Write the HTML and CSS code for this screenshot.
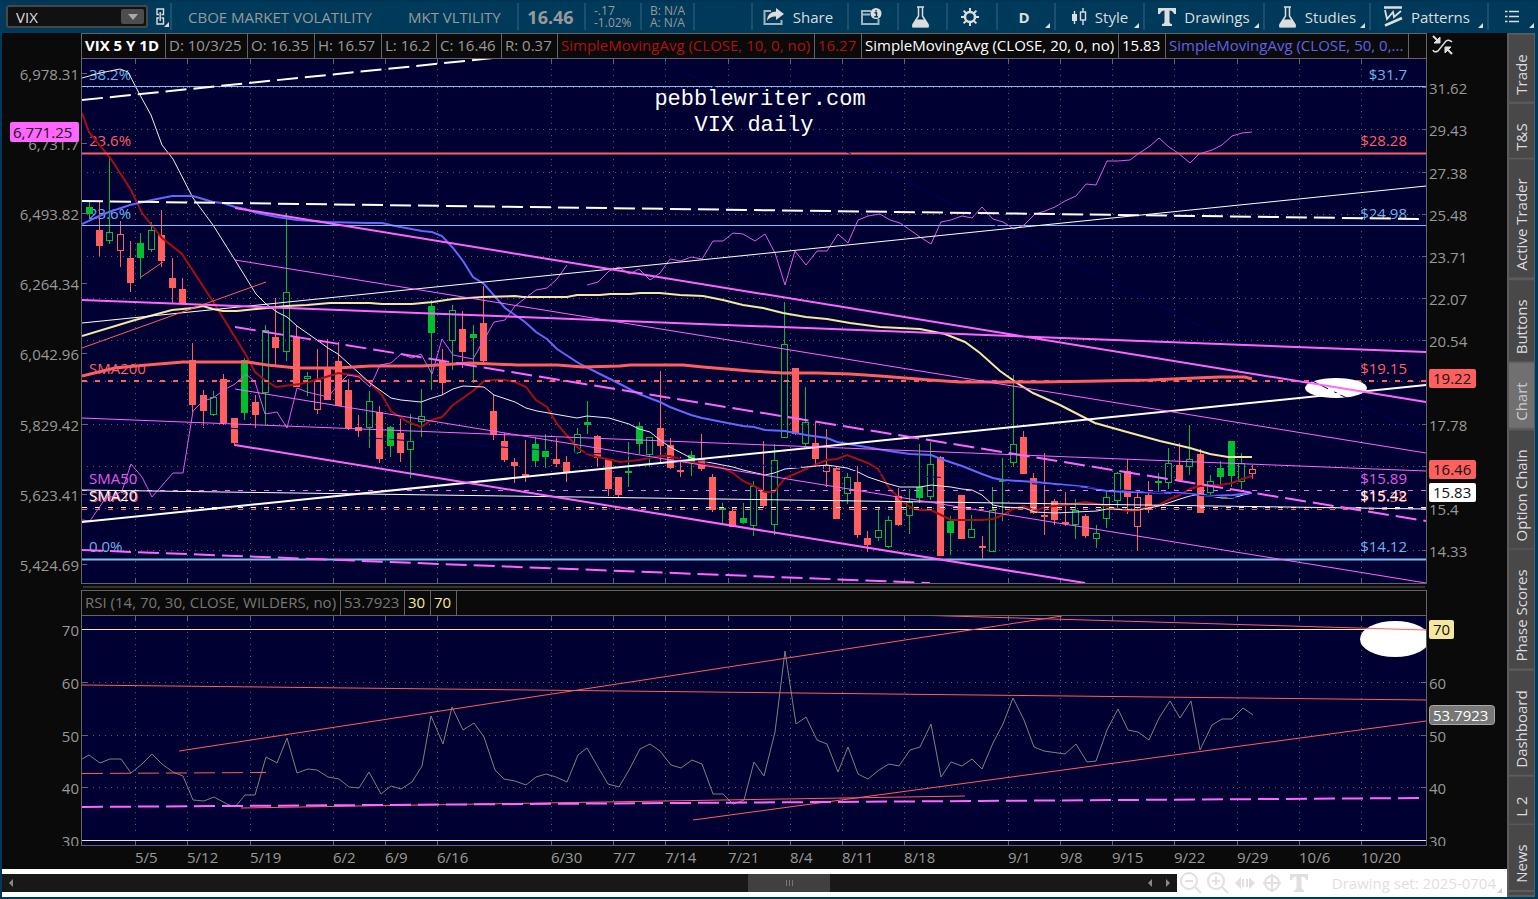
FILE: index.html
```html
<!DOCTYPE html>
<html lang="en">
<head>
    <meta charset="UTF-8">
    <meta name="viewport" content="width=device-width, initial-scale=1.0">
    <title>VIX Chart</title>
    <link rel="stylesheet" href="styles.css">
</head>
<body>
    <header class="toolbar">
        <div class="symbol">
            <div class="symbol-box">
                <input type="text" class="symbol-input" value="VIX" aria-label="Symbol">
                <button class="symbol-arrow" aria-label="Symbol history"><svg width="10" height="6"><path d="M0 0H10L5 6Z" fill="#aaa"/></svg></button>
            </div>
            <button class="icon-button corner" aria-label="Link">
                <svg width="9" height="18" fill="none" stroke="#ddd" stroke-width="1.4"><path d="M3 6.500H1V1H7.500V6.500H5.500M3 10H1V16H7.500V10H5.500M4.200 4V13"/></svg>
            </button>
        </div>
        <div class="section names"><span>CBOE MARKET VOLATILITY</span><span>MKT VLTILITY</span></div>
        <div class="section price">16.46</div>
        <div class="section small change"><span>-.17</span><span>-1.02%</span></div>
        <div class="section small bid"><span>B: N/A</span><span>A: N/A</span></div>
        <div class="section spacer"></div>
        <button class="section share">
            <svg width="22" height="18"><path d="M8 3H1.500V16H18.500V12" fill="none" stroke="#9fb3bf" stroke-width="2"/><path d="M13 0L21 6L13 12V8.500Q7 8 4 13Q4 4 13 3.500Z" fill="#ddd"/></svg>
            Share
        </button>
        <button class="section info" aria-label="News">
            <svg width="21" height="18"><path d="M10 3H1V16H17.500V11M1 6.500H9" fill="none" stroke="#9fb3bf" stroke-width="2"/><circle cx="15" cy="5.500" r="5.500" fill="#ddd"/><path d="M13.500 4.800H15.500V8.500M13.300 8.700H17M15 2V3.500" stroke="#003a5a" stroke-width="1.400" fill="none"/></svg>
        </button>
        <button class="section flask" aria-label="Edit studies">
            <svg width="20" height="22"><path d="M6 1H13M7.500 1V10L2 18.500V20.500H17V18.500L11.500 10V1" fill="none" stroke="#ddd" stroke-width="1.500"/><path d="M5.500 13.500H13.500L17.500 19V21.500H1.500V19Z" fill="#ddd"/></svg>
        </button>
        <button class="section gear" aria-label="Settings">
            <svg width="20" height="20" fill="none" stroke="#ddd"><circle cx="10" cy="10" r="5" stroke-width="2.500"/><path d="M10 1V4M10 16V19M1 10H4M16 10H19M3.600 3.600L6 6M14 14L16.400 16.400M16.400 3.600L14 6M6 14L3.600 16.400" stroke-width="2"/></svg>
        </button>
        <button class="section period corner">D</button>
        <button class="section style corner">
            <svg width="16" height="18"><path d="M3.500 3V16M12 0V4M12 12V17" stroke="#ddd" stroke-width="1.400"/><rect x="1" y="6" width="5" height="7" fill="#ddd"/><rect x="9.500" y="4" width="5" height="8" fill="none" stroke="#ddd" stroke-width="1.400"/></svg>
            Style
        </button>
        <button class="section drawings corner">
            <svg width="18" height="18"><path d="M0 0H18V6H16Q15 2.500 11.500 2.500V14Q11.500 16 14 16V18H4V16Q6.500 16 6.500 14V2.500Q3 2.500 2 6H0Z" fill="#ddd"/></svg>
            Drawings
        </button>
        <button class="section studies corner">
            <svg width="19" height="22"><path d="M6 1H13M7.500 1V10L2 18.500V20.500H17V18.500L11.500 10V1" fill="none" stroke="#ddd" stroke-width="1.500"/><path d="M5.500 13.500H13.500L17.500 19V21.500H1.500V19Z" fill="#ddd"/></svg>
            Studies
        </button>
        <button class="section patterns corner">
            <svg width="19" height="21" fill="none" stroke="#ddd"><path d="M0 1.500H18M1 19.500L18 12" stroke-width="2.500"/><path d="M1 4L3 13L9 6L10 11L17 5" stroke-width="1.800"/></svg>
            Patterns
        </button>
        <button class="section menu corner" aria-label="Menu">
            <svg width="14" height="14"><path d="M0 1.500H2.500M0 6.500H2.500M0 11.500H2.500M4 1.500H14M4 6.500H14M4 11.500H14" stroke="#ddd" stroke-width="1.600"/></svg>
        </button>
    </header>

    <div class="workspace">
        <main class="charts">
            <div class="legend-row">
                <div class="legend">
                    <span class="cell title">VIX 5 Y 1D</span>
                    <span class="cell date"><span>D: 10/3/25</span></span>
                    <span class="cell open"><span>O: 16.35</span></span>
                    <span class="cell open"><span>H: 16.57</span></span>
                    <span class="cell low"><span>L: 16.2</span></span>
                    <span class="cell close"><span>C: 16.46</span></span>
                    <span class="cell range"><span>R: 0.37</span></span>
                    <span class="cell study red"><span>SimpleMovingAvg (CLOSE, 10, 0, no)</span></span>
                    <span class="cell value red"><span>16.27</span></span>
                    <span class="cell study white"><span>SimpleMovingAvg (CLOSE, 20, 0, no)</span></span>
                    <span class="cell value white"><span>15.83</span></span>
                    <span class="cell last blue"><span>SimpleMovingAvg (CLOSE, 50, 0,...</span></span>
                </div>
                <button class="icon-button" aria-label="Collapse">
                    <svg width="22" height="22" fill="none" stroke="#ddd"><path d="M1 15Q2 18 6 16L14 6Q17 4 20 7" stroke-width="1.500"/><path d="M1 1L7 7M20 19L14 13" stroke-width="2"/><path d="M8 2V8H2ZM13 18V12H19Z" fill="#ddd"/></svg>
                </button>
            </div>

            <svg class="pane" id="price-pane" viewBox="2 58 1505 532">
                <defs><clipPath id="price-clip"><rect x="82" y="59" width="1344" height="524"/></clipPath></defs>
                <rect x="81.500" y="58.500" width="1345" height="525" class="plot"/>
                <g class="grid" id="price-grid"></g>
                <g class="axis" id="price-axis"></g>
                <g clip-path="url(#price-clip)">
                    <g class="text-blue"><text x="89" y="80">38.2%</text><text x="89" y="219">23.6%</text><text x="89" y="552">0.0%</text></g>
                    <g class="text-blue end"><text x="1407" y="80">$31.7</text><text x="1407" y="219">$24.98</text><text x="1407" y="552">$14.12</text></g>
                    <g class="text-coral"><text x="89" y="146">23.6%</text><text x="89" y="374">SMA200</text><text x="90" y="502">SMA10</text></g>
                    <g class="text-coral end"><text x="1407" y="146">$28.28</text><text x="1407" y="374">$19.15</text><text x="1407" y="502">$15.38</text></g>
                    <text class="text-pink" x="89" y="484">SMA50</text><text class="text-pink end" x="1407" y="484">$15.89</text>
                    <text class="text-white" x="89" y="501">SMA20</text><text class="text-white end" x="1407" y="501">$15.42</text>

                    <g id="candles"></g>

                    <!-- moving averages -->
                    <polyline class="sma10" points="82,113 89,132 111,159 131,190 142,213 162,238 182,254 214,303 246,355 255,372 265,380 276,387 300,384 320,379 338,373 360,376 370,383 382,395 391,411 408,422 421,427 432,420 442,417 453,405 473,391 484,381 494,380 505,380 515,382 526,387 536,400 547,407 557,424 577,447 587,454 598,457 620,462 639,460 660,456 670,456 683,460 691,462 702,464 723,468 733,473 743,481 754,486 765,492 774,492 785,478 795,474 817,464 827,460 837,459 847,455 868,463 878,469 889,488 900,499 910,507 920,510 931,510 941,515 951,520 982,520 993,519 1003,515 1013,509 1024,506 1035,511 1045,507 1065,505 1086,502 1107,506 1117,509 1128,511 1138,510 1148,507 1159,505 1170,499 1180,495 1190,489 1200,486 1220,485 1232,483 1242,479 1252,476"/>
                    <polyline class="sma20" points="82,78 100,73 120,69 128,72 140,95 151,115 162,145 173,159 193,198 213,225 235,260 256,294 266,304 277,312 287,317 297,326 317,340 328,348 338,354 370,383 391,398 401,400 421,402 432,398 442,395 453,389 463,386 484,387 494,395 515,402 526,408 537,411 577,418 587,416 609,418 619,421 629,424 639,429 650,432 660,440 670,447 691,458 702,461 733,467 743,470 765,475 774,473 785,469 806,467 827,465 847,468 858,472 868,477 889,484 900,487 920,487 931,485 951,487 962,489 972,490 982,495 993,505 1003,507 1024,508 1035,512 1055,513 1076,512 1097,511 1107,509 1138,510 1159,506 1180,499 1190,496 1200,494 1210,496 1222,498 1233,498 1243,495 1252,493"/>
                    <polyline class="sma50" points="82,224 97,217 109,212 130,205 152,200 172,196 193,196 213,202 223,203 235,207 245,209 257,213 277,217 297,220 327,222 367,223 382,223 395,226 422,231 432,232 442,236 453,248 463,261 473,277 484,284 505,308 525,322 536,332 547,339 557,349 580,364 598,373 620,384 639,394 660,402 670,407 691,415 702,418 743,426 754,427 765,430 785,431 806,435 827,438 837,442 889,451 910,454 931,455 941,459 962,466 982,474 993,478 1003,480 1035,482 1055,484 1086,487 1107,491 1128,492 1180,493 1210,496 1233,495 1252,493"/>
                    <polyline class="sma100" points="82,336 135,320 172,310 193,308 203,306 213,309 223,311 237,311 267,308 287,306 307,305 330,303 370,303 382,304 412,304 433,302 453,299 483,297 515,296 523,297 567,297 577,295 600,295 610,294 630,294 640,293 660,293 680,295 703,296 723,300 743,305 763,308 783,313 806,317 827,319 850,323 880,327 920,329 945,334 965,342 980,353 1000,371 1017,383 1033,393 1060,405 1095,423 1127,432 1160,441 1190,448 1210,454 1228,457 1252,457"/>
                    <polyline class="sma200" points="82,376 115,368 147,365 183,362 247,362 267,365 297,368 337,368 370,366 422,366 470,363 517,365 557,365 583,367 620,366 630,365 683,365 703,367 750,371 783,373 817,373 850,374 880,376 930,380 960,382 1040,382 1100,381 1150,380 1195,378 1220,377 1245,377 1252,379"/>

                    <!-- fib levels and horizontals -->
                    <path class="level" d="M82 86.500H1426M82 225.500H1426"/>
                    <path class="level thick" d="M82 559.500H1426"/>
                    <path class="resist" d="M82 153.500H1426"/>
                    <path class="coral-dots thick" d="M82 381H1426"/>
                    <path class="coral-dots" d="M82 509.500H1426"/>
                    <path class="white-dots" d="M82 507.500H1426"/>
                    <path class="pink-dots" d="M82 490.500H1426"/>

                    <!-- comparison symbol -->
                    <path class="pink compare" d="M82 520L90 521L107 496L112 497L122 491L131 464L142 477L152 497L173 473H183L193 411L203 401L213 398L224 390L235 384L246 374L255 382L265 414L277 412L287 428L297 388L307 392L328 397L338 385L348 375L359 377L370 387L380 365L391 363L401 354L412 358L421 354L432 374L442 339L453 355L463 357L473 359L494 322L505 320L515 306L536 290L547 288L557 279L567 265M587 285L598 282L609 271L619 267L629 274L639 269L650 280L660 273L670 259L681 261L691 257L702 259L713 241H723L733 233L743 234L755 241L765 234L775 253L785 285L795 251L806 265L817 251H827L838 234L848 243L858 220L868 216L880 214L890 220L900 223L920 237L931 244L941 222L951 220L962 216L972 218L982 207L993 219L1003 222L1014 229L1024 225L1035 214L1045 211L1055 207L1065 201L1076 196L1086 184L1096 185L1107 161H1118L1130 160L1138 154L1150 146L1159 138L1169 147L1178 153L1190 163L1199 154L1212 150L1222 145L1232 136L1242 133L1252 132"/>

                    <!-- trend lines -->
                    <ellipse cx="1336" cy="388" rx="31" ry="10" fill="#fff"/>
                    <path class="navy dashed" d="M656 58L1426 437M82 418L1426 511"/>
                    <path class="white" d="M82 323L1426 186M82 490L1426 509"/>
                    <path class="white thick" d="M82 522L1426 385"/>
                    <path class="white thick dashed" d="M82 100L494 58M82 201L1420 219"/>
                    <path class="pink" d="M235 260L1426 453M235 389L1426 583M82 418L1426 471"/>
                    <path class="pink thick" d="M235 208L1426 402M235 445L1085 583M82 300L1426 352"/>
                    <path class="pink thick dashed" d="M235 327L1426 521M82 550L930 583"/>
                    <path class="coral" d="M82 348L266 282M141 277L163 262"/>
                    <text class="watermark" x="760" y="105">pebblewriter.com</text>
                    <text class="watermark" x="754" y="131">VIX daily</text>
                </g>
                <g class="chip">
                    <rect x="10" y="122" width="69" height="20" rx="2" fill="#ff66ff"/><text x="13" y="138">6,771.25</text>
                    <rect x="1429" y="369" width="47" height="19" rx="2" fill="#ff5f5f"/><text x="1433" y="384">19.22</text>
                    <rect x="1429" y="460" width="47" height="19" rx="2" fill="#ff5f5f"/><text x="1433" y="475">16.46</text>
                    <rect x="1429" y="483" width="47" height="19" rx="2" fill="#fff"/><text x="1433" y="498">15.83</text>
                </g>
                <rect x="83" y="586" width="1342" height="2" fill="#333"/>
            </svg>

            <div class="legend-row">
                <div class="legend">
                    <span class="cell rsi"><span>RSI (14, 70, 30, CLOSE, WILDERS, no)</span></span>
                    <span class="cell rsi-value"><span>53.7923</span></span>
                    <span class="cell cream">30</span>
                    <span class="cell cream">70</span>
                </div>
            </div>

            <svg class="pane" id="rsi-pane" viewBox="2 615 1505 254">
                <defs>
                    <clipPath id="rsi-clip"><rect x="82" y="616" width="1344" height="229"/></clipPath>
                    <clipPath id="rsi-axis-clip"><rect x="2" y="615" width="1505" height="231"/></clipPath>
                </defs>
                <rect x="81.500" y="615.500" width="1345" height="230" class="plot"/>
                <g class="grid" id="rsi-grid"></g>
                <g class="axis" id="rsi-axis" clip-path="url(#rsi-axis-clip)"></g>
                <g class="axis" id="dates"></g>
                <g clip-path="url(#rsi-clip)">
                    <path class="cream-line" d="M82 629.500H1426M82 840.500H1426"/>
                    <polyline class="rsi-line" points="82,759 89,755 100,763 110,759 121,759 131,773 142,764 152,754 162,764 173,772 183,776 193,800 204,801 214,797 227,804 235,807 245,795 255,795 266,757 277,763 287,738 297,773 308,769 317,770 328,777 339,779 349,787 359,788 369,772 381,794 391,786 401,789 412,782 422,766 431,716 443,744 452,707 463,730 474,723 484,737 495,770 504,779 515,781 526,785 536,777 546,774 556,777 567,782 578,755 587,748 598,767 608,784 619,787 629,770 640,749 650,744 660,751 671,765 681,768 692,760 702,764 713,794 723,794 733,804 744,800 754,762 764,776 775,732 785,651 796,724 806,717 817,740 827,744 838,772 848,747 858,774 868,779 879,770 889,764 899,766 910,750 920,747 931,724 941,777 951,762 962,766 972,759 982,769 993,743 1003,724 1013,698 1024,720 1034,747 1044,751 1065,754 1076,744 1087,762 1096,761 1107,730 1118,709 1128,730 1138,732 1149,740 1159,718 1170,701 1180,718 1191,701 1200,750 1212,725 1222,719 1232,719 1243,708 1253,715"/>
                    <ellipse cx="1395" cy="639" rx="35" ry="18" fill="#fff"/>
                    <path class="coral" d="M82 685L1426 700M179 751L1062 616M915 615L1426 630M241 808L965 796M693 820L1426 721"/>
                    <path class="coral dashed" d="M82 773.500L266 772.500"/>
                    <path class="pink thick dashed" d="M82 807L1419 798"/>
                </g>
                <g class="chip">
                    <rect x="1429" y="620" width="25" height="19" rx="2" fill="#f5e79e"/><text x="1433" y="635">70</text>
                    <rect x="1429.500" y="705.500" width="65" height="19" rx="3" fill="#777" stroke="#aaa"/><text class="text-white" x="1433" y="721">53.7923</text>
                </g>
            </svg>

            <footer class="bottom">
                <div class="scroll">
                    <button aria-label="Scroll to start"><svg width="4" height="8"><path d="M4 0V8L0 4Z" fill="#888"/></svg></button>
                    <div class="track"><div class="thumb"></div></div>
                    <button aria-label="Step left"><svg width="4" height="8"><path d="M4 0V8L0 4Z" fill="#888"/></svg></button>
                    <button aria-label="Step right"><svg width="4" height="8"><path d="M0 0V8L4 4Z" fill="#888"/></svg></button>
                </div>
                <div class="tools">
                    <button aria-label="Zoom out"><svg width="22" height="22" fill="none" stroke="#e0e0e0" stroke-width="2"><circle cx="9" cy="9" r="8"/><path d="M15 15L21 21M5 9H13"/></svg></button>
                    <button aria-label="Zoom in"><svg width="22" height="22" fill="none" stroke="#e0e0e0" stroke-width="2"><circle cx="9" cy="9" r="8"/><path d="M15 15L21 21M5 9H13M9 5V13"/></svg></button>
                    <button aria-label="Pan"><svg width="20" height="12" fill="#e0e0e0"><path d="M6 0V12L0 6ZM14 0V12L20 6ZM7 2H9V10H7ZM11 2H13V10H11Z"/></svg></button>
                    <button aria-label="Crosshair"><svg width="18" height="18" fill="none" stroke="#e0e0e0" stroke-width="2"><circle cx="9" cy="9" r="7"/><path d="M0 9H18M9 0V18"/></svg></button>
                    <button aria-label="Text"><svg width="18" height="18"><path d="M0 0H18V6H16Q15 2.500 11.500 2.500V14Q11.500 16 14 16V18H4V16Q6.500 16 6.500 14V2.500Q3 2.500 2 6H0Z" fill="#e0e0e0"/></svg></button>
                </div>
                <button class="drawing-set corner">Drawing set: 2025-0704</button>
            </footer>
        </main>

        <nav class="sidebar">
            <button class="tab">Trade</button>
            <button class="tab">T&amp;S</button>
            <button class="tab">Active Trader</button>
            <button class="tab">Buttons</button>
            <button class="tab active">Chart</button>
            <button class="tab">Option Chain</button>
            <button class="tab">Phase Scores</button>
            <button class="tab">Dashboard</button>
            <button class="tab">L 2</button>
            <button class="tab">News</button>
            <div class="tab-rest"></div>
        </nav>
    </div>
    <script src="chart.js"></script>
</body>
</html>
```
FILE: styles.css
```css
* {
    box-sizing: border-box;
}
body {
    margin: 0;
    padding: 0 3px 2px 2px;
    min-height: 100vh;
    display: flex;
    flex-direction: column;
    background-color: #003a5a;
    color: #999;
    font-family: "Open Sans", sans-serif;
    font-size: 15px;
}
button, input {
    font: inherit;
    color: inherit;
    background: none;
    border: none;
    padding: 0;
    margin: 0;
}
button {
    cursor: pointer;
}
svg {
    display: block;
    flex: none;
}

/* toolbar */
.toolbar {
    display: flex;
    height: 33px;
    padding: 1px 0 3px;
    margin-right: -3px;
    border-top: 2px solid #003454;
    color: #ddd;
}
.symbol {
    width: 168px;
    display: flex;
    align-items: center;
    padding-left: 4px;
}
.symbol-box {
    display: flex;
    align-items: center;
    width: 142px;
    height: 23px;
    padding: 0 2px 0 8px;
    border: 2px solid #474747;
    border-radius: 3px;
    background-color: #111;
}
.symbol-input {
    flex: 1;
    min-width: 0;
    outline: none;
}
.symbol-arrow {
    display: flex;
    justify-content: center;
    align-items: center;
    width: 23px;
    height: 15px;
    border-radius: 2px;
    background-color: #4d4d4d;
}
.icon-button {
    padding: 0 4px;
    margin-left: 4px;
}
.corner {
    position: relative;
}
.corner::after {
    content: "";
    position: absolute;
    right: 4px;
    bottom: 2px;
    border-left: 5px solid transparent;
    border-bottom: 5px solid #ddd;
}
.symbol .corner::after {
    right: 0;
    bottom: -1px;
}
.section {
    display: flex;
    align-items: center;
    justify-content: center;
    gap: 8px;
    border-left: 2px solid #1c4f6e;
}
.names {
    width: 347px;
    justify-content: flex-start;
    gap: 36px;
    padding-left: 16px;
    color: #999;
}
.price {
    width: 67px;
    padding-right: 2px;
    color: #999;
    font-size: 18px;
    font-weight: bold;
}
.small {
    flex-direction: column;
    align-items: flex-start;
    gap: 0;
    padding-left: 8px;
    color: #999;
    font-size: 12px;
    line-height: 12px;
}
.change {
    width: 56px;
}
.bid {
    width: 53px;
}
.spacer {
    flex: 1;
}
.share {
    width: 96px;
    padding-right: 4px;
}
.info, .gear {
    width: 50px;
    padding-right: 4px;
}
.flask {
    width: 49px;
    padding-right: 4px;
}
.period {
    width: 58px;
    padding-right: 4px;
    font-weight: bold;
}
.style {
    width: 89px;
}
.drawings {
    width: 120px;
}
.studies {
    width: 106px;
}
.patterns {
    width: 118px;
    padding-right: 4px;
}
.menu {
    width: 51px;
    padding-right: 4px;
}

/* layout */
.workspace {
    flex: 1;
    display: flex;
}
.charts {
    flex: 1;
    min-width: 0;
    display: flex;
    flex-direction: column;
    background-color: #0a0a0a;
}
.legend-row {
    display: flex;
    height: 25px;
    padding-left: 79px;
    padding-right: 80px;
}
.legend {
    flex: 1;
    display: flex;
    border: 1px solid #646464;
    border-bottom: none;
}
.legend-row .icon-button {
    width: 32px;
    margin-right: -32px;
    margin-left: 0;
    padding: 0 5px;
}
.cell {
    padding: 0 4px 0 3px;
    border-right: 1px solid #646464;
    line-height: 23px;
    white-space: nowrap;
}
.cell span {
    display: block;
    overflow: hidden;
}
.title {
    width: 84px;
    color: #fff;
    font-weight: bold;
}
.date {
    width: 82px;
}
.open {
    width: 67px;
}
.low {
    width: 55px;
}
.close {
    width: 65px;
}
.range {
    width: 56px;
}
.study {
    width: 257px;
    padding: 0 0 0 3px;
}
.value {
    width: 47px;
}
.last {
    width: 243px;
    padding: 0 0 0 3px;
}
.rsi {
    width: 259px;
    padding-right: 0;
    color: #777;
}
.rsi-value {
    width: 64px;
    color: #777;
}
.red {
    color: #b01010;
}
.white {
    color: #fff;
}
.blue {
    color: #6060f0;
}
.cream {
    width: 26px;
    color: #f5e79e;
}

/* chart panes */
.pane {
    width: 100%;
    height: auto;
}
.pane text {
    font-size: 15px;
}
.plot {
    fill: #000033;
    stroke: #646464;
}
.grid {
    fill: none;
    stroke: #606068;
    stroke-dasharray: 1 5;
    shape-rendering: crispEdges;
}
.axis {
    fill: #999;
    stroke: none;
}
.axis path {
    stroke: #646464;
}
.end {
    text-anchor: end;
}
.text-blue {
    fill: #6db3e8;
}
.text-coral {
    fill: #ff5f5f;
}
.text-pink {
    fill: #e05ce8;
}
.text-white {
    fill: #fff;
}
.chip {
    fill: #111;
}
.pane .watermark {
    font-family: "Liberation Mono", monospace;
    font-size: 22px;
    fill: #fff;
    text-anchor: middle;
}
polyline, path.white, path.pink, path.coral, path.navy {
    fill: none;
}
.up {
    stroke: #00c030;
    fill: none;
}
.up-solid {
    stroke: #00c030;
    fill: #00c030;
}
.down {
    stroke: #ff5f5f;
    fill: none;
}
.down-solid {
    stroke: #ff5f5f;
    fill: #ff5f5f;
}
#candles {
    shape-rendering: crispEdges;
}
.sma10 {
    stroke: #a80e0e;
    stroke-width: 2;
}
.sma20 {
    stroke: #eee;
}
.sma50 {
    stroke: #6666ff;
    stroke-width: 2;
}
.sma100 {
    stroke: #f5e79e;
    stroke-width: 2;
}
.sma200 {
    stroke: #ff5f5f;
    stroke-width: 3;
}
.level {
    stroke: #7ac0f0;
}
.resist {
    stroke: #ff5f5f;
    stroke-width: 2;
}
.coral-dots {
    stroke: #ff5f5f;
    stroke-dasharray: 5 8;
}
.white-dots {
    stroke: #fff;
    stroke-dasharray: 5 8;
}
.pink-dots {
    stroke: #ff66ff;
    stroke-dasharray: 5 8;
}
path.white {
    stroke: #fff;
}
.pink {
    stroke: #ff66ff;
}
.compare {
    stroke: #e05ce8;
}
.coral {
    stroke: #ff5f5f;
}
.navy {
    stroke: #000062;
}
.thick {
    stroke-width: 2;
}
.dashed {
    stroke-dasharray: 21 7;
}
.rsi-line {
    stroke: #808080;
}
.cream-line {
    stroke: #f5e79e;
}

/* bottom bar */
.bottom {
    flex: 1;
    display: flex;
    align-items: center;
    background-color: #fff;
    color: #e0e0e0;
}
.scroll {
    flex: 1;
    display: flex;
    height: 18px;
    background-color: #181818;
}
.scroll button {
    width: 18px;
    display: flex;
    align-items: center;
    justify-content: center;
}
.track {
    flex: 1;
    padding-left: 62%;
}
.thumb {
    width: 82px;
    height: 18px;
    background: repeating-linear-gradient(90deg, #777 0 1px, #404040 1px 3px) center / 7px 6px no-repeat #404040;
}
.tools {
    display: flex;
    align-items: center;
    gap: 5px;
    padding: 0 22px 0 3px;
}
.tools button {
    display: flex;
    align-items: center;
    justify-content: center;
    width: 22px;
}
.bottom .corner::after {
    right: -6px;
    bottom: 0;
    border-bottom-color: #ccc;
}
.drawing-set {
    margin-right: 11px;
}

/* side tabs */
.sidebar {
    width: 28px;
    display: flex;
    flex-direction: column;
    gap: 2px;
    padding: 2px 1px 2px 2px;
    background-color: #5c5c5c;
    color: #ddd;
}
/* rotated half a turn, so the top padding is the one below the label */
.tab {
    flex: 1 0 auto;
    writing-mode: vertical-rl;
    transform: rotate(180deg);
    padding: 7px 0 19px;
    line-height: 25px;
    background-color: #484848;
}
.active {
    background-color: #707070;
    color: #ccc;
}
.tab-rest {
    height: 3px;
    background-color: #484848;
}
```
FILE: chart.js
```js
const NS = 'http://www.w3.org/2000/svg';

function add(parent, name, attrs, text) {
    const el = document.createElementNS(NS, name);
    for (const key in attrs) el.setAttribute(key, attrs[key]);
    if (text) el.textContent = text;
    parent.appendChild(el);
}

const byId = id => document.getElementById(id);

const days = [
    [135, '5/5'], [187, '5/12'], [250, '5/19'], [333, '6/2'], [385, '6/9'], [437, '6/16'],
    [551, '6/30'], [613, '7/7'], [665, '7/14'], [728, '7/21'], [790, '8/4'], [842, '8/11'],
    [904, '8/18'], [1008, '9/1'], [1060, '9/8'], [1112, '9/15'], [1174, '9/22'], [1237, '9/29'],
    [1299, '10/6'], [1361, '10/20']
];
const rightTicks = [
    [88, '31.62'], [130, '29.43'], [173, '27.38'], [215, '25.48'], [257, '23.71'], [299, '22.07'],
    [341, '20.54'], [382, '19.11'], [425, '17.78'], [467, '16.54'], [509, '15.4'], [551, '14.33']
];
const leftTicks = [
    [74, '6,978.31'], [144, '6,731.7'], [214, '6,493.82'], [284, '6,264.34'],
    [354, '6,042.96'], [425, '5,829.42'], [495, '5,623.41'], [565, '5,424.69']
];
const rsiTicks = [[630, '70'], [683, '60'], [736, '50'], [788, '40'], [841, '30']];

days.forEach(([x, label]) => {
    add(byId('price-grid'), 'path', { d: `M${x + 0.5} 69V577` });
    add(byId('rsi-grid'), 'path', { d: `M${x + 0.5} 626V835` });
    add(byId('price-axis'), 'path', { d: `M${x + 0.5} 59v5M${x + 0.5} 583v-5` });
    add(byId('rsi-axis'), 'path', { d: `M${x + 0.5} 616v5M${x + 0.5} 845v-5` });
    add(byId('dates'), 'text', { x: x, y: 863 }, label);
});
rightTicks.forEach(([y, label]) => {
    add(byId('price-grid'), 'path', { d: `M87 ${y - 0.5}H1422` });
    add(byId('price-axis'), 'path', { d: `M1422 ${y - 0.5}h5` });
    add(byId('price-axis'), 'text', { x: 1429, y: y + 6 }, label);
});
leftTicks.forEach(([y, label]) => {
    add(byId('price-axis'), 'path', { d: `M82 ${y - 0.5}h5` });
    add(byId('price-axis'), 'text', { x: 79, y: y + 6, class: 'end' }, label);
});
rsiTicks.forEach(([y, label]) => {
    add(byId('rsi-grid'), 'path', { d: `M87 ${y - 0.5}H1422` });
    add(byId('rsi-axis'), 'path', { d: `M82 ${y - 0.5}h5M1421 ${y - 0.5}h5` });
    add(byId('rsi-axis'), 'text', { x: 79, y: y + 6, class: 'end' }, label);
    add(byId('rsi-axis'), 'text', { x: 1429, y: y + 6 }, label);
});

// high, low, body top, body bottom, type
// U = hollow green, G = solid green, R = solid red, H = hollow red
const candles = [
    [201, 219, 207, 214, 'G'], [202, 256, 230, 246, 'R'], [158, 244, 232, 241, 'U'], [221, 267, 234, 251, 'H'],
    [241, 292, 258, 283, 'R'], [233, 279, 243, 258, 'G'], [222, 252, 230, 250, 'U'], [210, 267, 235, 261, 'R'],
    [258, 303, 278, 288, 'R'], [278, 303, 289, 303, 'R'], [343, 412, 360, 405, 'R'], [390, 428, 395, 411, 'R'],
    [391, 416, 397, 415, 'U'], [374, 425, 379, 423, 'R'], [418, 446, 418, 443, 'R'], [358, 420, 360, 413, 'G'],
    [395, 428, 402, 415, 'R'], [325, 425, 330, 393, 'U'], [298, 365, 337, 348, 'R'], [213, 361, 292, 352, 'U'],
    [326, 387, 337, 387, 'R'], [372, 396, 376, 379, 'U'], [349, 414, 381, 410, 'H'], [339, 400, 367, 400, 'R'],
    [342, 406, 361, 406, 'R'], [379, 430, 390, 428, 'R'], [415, 437, 427, 431, 'R'], [391, 448, 401, 428, 'U'],
    [406, 463, 412, 459, 'R'], [426, 457, 427, 446, 'G'], [419, 462, 433, 453, 'R'], [414, 478, 441, 450, 'U'],
    [389, 437, 416, 422, 'U'], [300, 390, 306, 333, 'G'], [349, 395, 361, 383, 'R'], [305, 370, 310, 341, 'U'],
    [311, 368, 329, 352, 'R'], [325, 383, 334, 338, 'G'], [286, 362, 323, 361, 'R'], [394, 440, 411, 435, 'R'],
    [433, 462, 441, 460, 'R'], [458, 483, 462, 466, 'R'], [440, 482, 474, 477, 'R'], [437, 467, 444, 461, 'G'],
    [434, 468, 451, 457, 'G'], [438, 467, 459, 464, 'R'], [456, 482, 462, 473, 'R'], [428, 454, 434, 453, 'U'],
    [401, 434, 422, 425, 'G'], [435, 467, 436, 458, 'R'], [459, 496, 459, 489, 'R'], [477, 497, 477, 495, 'R'],
    [442, 487, 471, 473, 'G'], [422, 454, 426, 444, 'G'], [437, 467, 437, 455, 'U'], [371, 462, 428, 446, 'R'],
    [438, 469, 445, 468, 'R'], [457, 477, 470, 472, 'R'], [451, 476, 455, 463, 'G'], [434, 471, 459, 469, 'R'],
    [474, 512, 477, 510, 'R'], [503, 524, 508, 509, 'G'], [508, 527, 511, 527, 'R'], [503, 524, 518, 523, 'G'],
    [481, 536, 486, 526, 'U'], [441, 508, 491, 506, 'R'], [444, 535, 460, 525, 'U'], [302, 438, 344, 438, 'U'],
    [368, 435, 368, 434, 'R'], [387, 447, 422, 444, 'U'], [422, 467, 443, 459, 'R'], [429, 487, 465, 472, 'H'],
    [467, 519, 468, 519, 'R'], [473, 504, 477, 494, 'U'], [466, 538, 482, 535, 'R'], [531, 552, 538, 545, 'R'],
    [508, 541, 530, 538, 'U'], [516, 548, 520, 547, 'U'], [488, 526, 496, 525, 'R'], [489, 534, 502, 516, 'U'],
    [444, 503, 487, 498, 'G'], [442, 500, 464, 497, 'U'], [456, 556, 457, 556, 'R'], [516, 555, 521, 533, 'G'],
    [495, 539, 495, 539, 'R'], [515, 538, 529, 538, 'U'], [536, 559, 546, 548, 'R'], [487, 552, 510, 552, 'U'],
    [458, 521, 480, 481, 'G'], [375, 467, 444, 463, 'U'], [431, 474, 437, 474, 'R'], [473, 514, 478, 513, 'R'],
    [453, 535, 515, 517, 'R'], [499, 525, 501, 520, 'R'], [492, 526, 522, 524, 'R'], [499, 539, 510, 525, 'U'],
    [514, 538, 516, 536, 'R'], [525, 548, 533, 539, 'U'], [492, 528, 497, 519, 'U'], [472, 508, 473, 501, 'U'],
    [459, 514, 471, 497, 'R'], [493, 551, 497, 527, 'H'], [481, 513, 495, 510, 'R'], [473, 492, 481, 483, 'G'],
    [448, 489, 463, 483, 'U'], [443, 480, 465, 480, 'R'], [425, 475, 459, 467, 'U'], [449, 513, 454, 513, 'R'],
    [475, 495, 481, 493, 'U'], [461, 484, 468, 477, 'G'], [441, 487, 441, 476, 'G'], [453, 489, 463, 482, 'U'],
    [465, 479, 469, 474, 'H']
];
const candleClass = { U: 'up', G: 'up-solid', H: 'down', R: 'down-solid' };

candles.forEach(([high, low, top, bottom, type], i) => {
    const x = Math.floor(89 + i * 10.384) + 0.5;
    add(byId('candles'), 'path', { class: candleClass[type], d: `M${x} ${high}V${top}M${x} ${bottom}V${low}` });
    add(byId('candles'), 'rect', {
        class: candleClass[type],
        x: x - 3, y: top + 0.5, width: 6, height: Math.max(bottom - top - 1, 1)
    });
});
```
